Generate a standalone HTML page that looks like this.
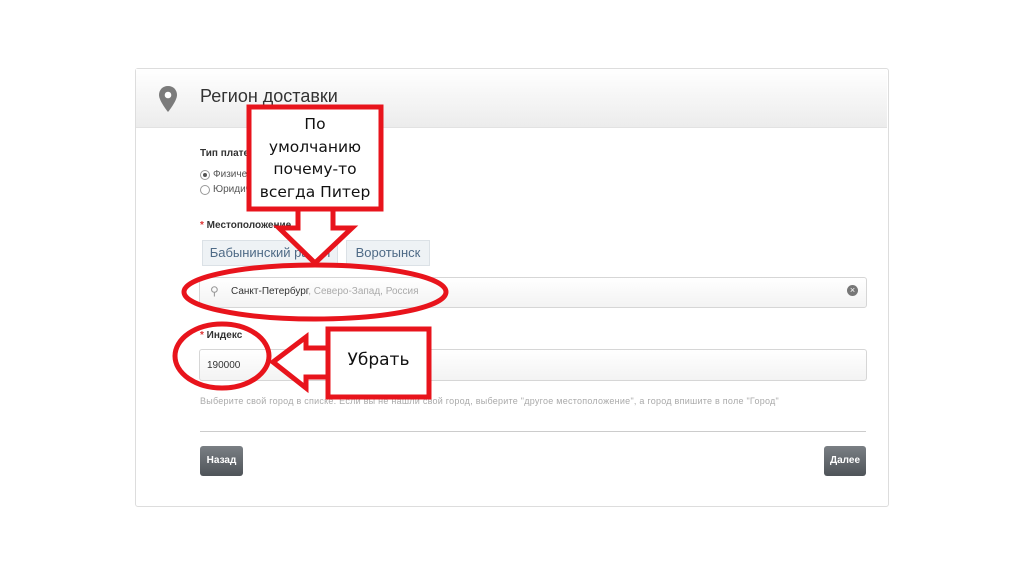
<!DOCTYPE html>
<html><head><meta charset="utf-8"><style>
body{margin:0;width:1024px;height:574px;background:#fff;font-family:"Liberation Sans",sans-serif;position:relative;overflow:hidden}
.a{position:absolute}
.card{left:135px;top:68px;width:752px;height:437px;border:1px solid #ddd;border-radius:3px;background:#fff}
.hdr{left:136px;top:69px;width:751px;height:58px;background:linear-gradient(#fff,#ececec);border-bottom:1px solid #e2e2e2}
.inp{border:1px solid #d6d6d6;border-radius:3px;background:linear-gradient(#fff,#f3f3f3)}
.btn{background:linear-gradient(#7a7f84,#4f5459);border-radius:3px;color:#fff;font-size:10px;font-weight:bold;text-align:center;line-height:30px}
.tag{background:#eef2f5;border:1px solid #dbe1e6;color:#4e6a86;font-size:13px;line-height:24px;text-align:center}
.red{font-family:"DejaVu Sans",sans-serif;color:#111}
</style></head><body>
<div class="a card"></div>
<div class="a hdr"></div>
<svg class="a" style="left:158px;top:86px" width="20" height="26" viewBox="0 0 20 26"><path d="M10 0C4.5 0 1 4 1 9c0 6 9 17 9 17s9-11 9-17c0-5-3.5-9-9-9z" fill="#7b7b7b"/><circle cx="10" cy="9" r="3.3" fill="#fff"/></svg>
<div class="a" style="left:200px;top:86px;font-size:18px;color:#333">Регион доставки</div>
<div class="a" style="left:200px;top:148px;font-size:10px;font-weight:bold;color:#333">Тип плательщика</div>
<div class="a" style="left:200px;top:170px;width:8px;height:8px;border:1px solid #999;border-radius:50%"></div>
<div class="a" style="left:203px;top:173px;width:4px;height:4px;background:#555;border-radius:50%"></div>
<div class="a" style="left:213px;top:169px;font-size:10px;color:#555">Физическое лицо</div>
<div class="a" style="left:200px;top:185px;width:8px;height:8px;border:1px solid #999;border-radius:50%"></div>
<div class="a" style="left:213px;top:184px;font-size:10px;color:#555">Юридическое лицо</div>
<div class="a" style="left:200px;top:220px;font-size:10px;font-weight:bold;color:#333"><span style="color:#d33">*</span> Местоположение</div>
<div class="a tag" style="left:202px;top:240px;width:134px;height:24px">Бабынинский район</div>
<div class="a tag" style="left:346px;top:240px;width:82px;height:24px">Воротынск</div>
<div class="a inp" style="left:199px;top:277px;width:666px;height:29px"></div>
<div class="a" style="left:210px;top:284px;font-size:12px;color:#999">&#9906;</div>
<div class="a" style="left:231px;top:286px;font-size:10px;color:#333">Санкт-Петербург<span style="color:#aaa">, Северо-Запад, Россия</span></div>
<div class="a" style="left:847px;top:285px;width:11px;height:11px;border-radius:50%;background:#777;color:#fff;font-size:9px;line-height:11px;text-align:center">×</div>
<div class="a" style="left:200px;top:330px;font-size:10px;font-weight:bold;color:#333"><span style="color:#d33">*</span> Индекс</div>
<div class="a inp" style="left:199px;top:349px;width:666px;height:30px"></div>
<div class="a" style="left:207px;top:360px;font-size:10px;color:#333">190000</div>
<div class="a" style="left:200px;top:396px;font-size:9px;color:#aaa;letter-spacing:0.25px">Выберите свой город в списке. Если вы не нашли свой город, выберите "другое местоположение", а город впишите в поле "Город"</div>
<div class="a" style="left:200px;top:431px;width:666px;height:1px;background:#ccc"></div>
<div class="a btn" style="left:200px;top:446px;width:43px;height:30px">Назад</div>
<div class="a btn" style="left:824px;top:446px;width:42px;height:30px">Далее</div>
<svg class="a" style="left:0;top:0" width="1024" height="574">
<g fill="none" stroke="#e8141c" stroke-width="5">
<ellipse cx="315" cy="292" rx="131" ry="27"/>
<ellipse cx="222" cy="356" rx="47" ry="32"/>
</g>
<path d="M298 208 V228 H279 L315 263 L352 228 H333 V208" fill="#fff" stroke="#e8141c" stroke-width="5"/>
<rect x="249" y="107" width="132" height="102" fill="#fff" stroke="#e8141c" stroke-width="5"/>
<path d="M328 348 H306 V337 L273 362 L306 388 V377 H328" fill="#fff" stroke="#e8141c" stroke-width="5"/>
<rect x="328" y="329" width="101" height="68" fill="#fff" stroke="#e8141c" stroke-width="5"/>
</svg>
<div class="a red" style="left:250px;top:113px;width:130px;text-align:center;font-size:15.5px;line-height:22.5px">По<br>умолчанию<br>почему-то<br>всегда Питер</div>
<div class="a red" style="left:330px;top:350px;width:97px;text-align:center;font-size:17px">Убрать</div>
</body></html>
